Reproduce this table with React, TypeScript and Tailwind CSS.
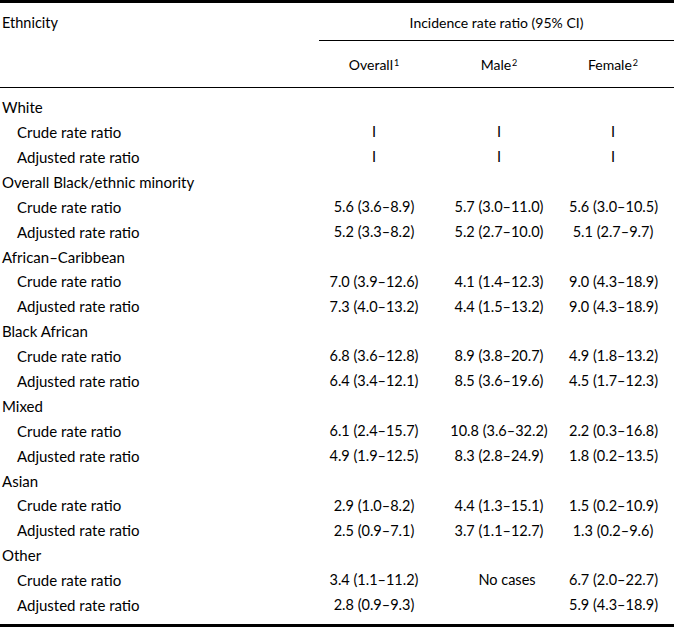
const groups = [
  {
    name: 'White',
    rows: [
      { label: 'Crude rate ratio', v: ['I', 'I', 'I'] },
      { label: 'Adjusted rate ratio', v: ['I', 'I', 'I'] },
    ],
  },
  {
    name: 'Overall Black/ethnic minority',
    rows: [
      { label: 'Crude rate ratio', v: ['5.6 (3.6–8.9)', '5.7 (3.0–11.0)', '5.6 (3.0–10.5)'] },
      { label: 'Adjusted rate ratio', v: ['5.2 (3.3–8.2)', '5.2 (2.7–10.0)', '5.1 (2.7–9.7)'] },
    ],
  },
  {
    name: 'African–Caribbean',
    rows: [
      { label: 'Crude rate ratio', v: ['7.0 (3.9–12.6)', '4.1 (1.4–12.3)', '9.0 (4.3–18.9)'] },
      { label: 'Adjusted rate ratio', v: ['7.3 (4.0–13.2)', '4.4 (1.5–13.2)', '9.0 (4.3–18.9)'] },
    ],
  },
  {
    name: 'Black African',
    rows: [
      { label: 'Crude rate ratio', v: ['6.8 (3.6–12.8)', '8.9 (3.8–20.7)', '4.9 (1.8–13.2)'] },
      { label: 'Adjusted rate ratio', v: ['6.4 (3.4–12.1)', '8.5 (3.6–19.6)', '4.5 (1.7–12.3)'] },
    ],
  },
  {
    name: 'Mixed',
    rows: [
      { label: 'Crude rate ratio', v: ['6.1 (2.4–15.7)', '10.8 (3.6–32.2)', '2.2 (0.3–16.8)'] },
      { label: 'Adjusted rate ratio', v: ['4.9 (1.9–12.5)', '8.3 (2.8–24.9)', '1.8 (0.2–13.5)'] },
    ],
  },
  {
    name: 'Asian',
    rows: [
      { label: 'Crude rate ratio', v: ['2.9 (1.0–8.2)', '4.4 (1.3–15.1)', '1.5 (0.2–10.9)'] },
      { label: 'Adjusted rate ratio', v: ['2.5 (0.9–7.1)', '3.7 (1.1–12.7)', '1.3 (0.2–9.6)'] },
    ],
  },
  {
    name: 'Other',
    rows: [
      { label: 'Crude rate ratio', v: ['3.4 (1.1–11.2)', 'No cases', '6.7 (2.0–22.7)'] },
      { label: 'Adjusted rate ratio', v: ['2.8 (0.9–9.3)', '', '5.9 (4.3–18.9)'] },
    ],
  },
];

const cols = 'grid grid-cols-[319px_110px_140px_88px]';

export default function App() {
  return (
    <div className="w-[674px] h-[627px] bg-white text-black text-[14px] font-['Lato','Liberation_Sans',sans-serif]">
      {/* top rule */}
      <div className="h-[3px] bg-black" />

      {/* header */}
      <div className="flex h-[37px] items-center">
        <div className="w-[319px] pl-[2px] pt-[2px] text-[14.5px]">Ethnicity</div>
        <div className="flex-1 text-center pt-[1px]">Incidence rate ratio (95% CI)</div>
      </div>
      <div className="ml-[319px] h-px bg-black" />
      <div className={`${cols} h-[46px] items-center`}>
        <div />
        <div className="text-center">
          Overall<sup className="relative top-[-4px] ml-px text-[9px] align-baseline">1</sup>
        </div>
        <div className="text-center">
          Male<sup className="relative top-[-4px] ml-px text-[9px] align-baseline">2</sup>
        </div>
        <div className="text-center">
          Female<sup className="relative top-[-4px] ml-px text-[9px] align-baseline">2</sup>
        </div>
      </div>
      <div className="h-px bg-black" />

      {/* body */}
      <div className="pt-[7px]">
        {groups.map((g) => (
          <div key={g.name}>
            <div className="h-[24.9px] flex items-center pl-[2px] text-[15px]">{g.name}</div>
            {g.rows.map((r) => (
              <div key={r.label} className={`${cols} h-[24.9px] items-center`}>
                <div className="pl-[17px] text-[15px]">{r.label}</div>
                {r.v.map((x, i) => (
                  <div
                    key={i}
                    className={
                      x === 'No cases'
                        ? 'text-center whitespace-nowrap text-[14.5px] pl-[16px]'
                        : 'text-center whitespace-nowrap text-[14.5px]'
                    }
                  >
                    {x}
                  </div>
                ))}
              </div>
            ))}
          </div>
        ))}
      </div>

      {/* bottom rule */}
      <div className="mt-[6px] h-[3px] bg-black" />
    </div>
  );
}
